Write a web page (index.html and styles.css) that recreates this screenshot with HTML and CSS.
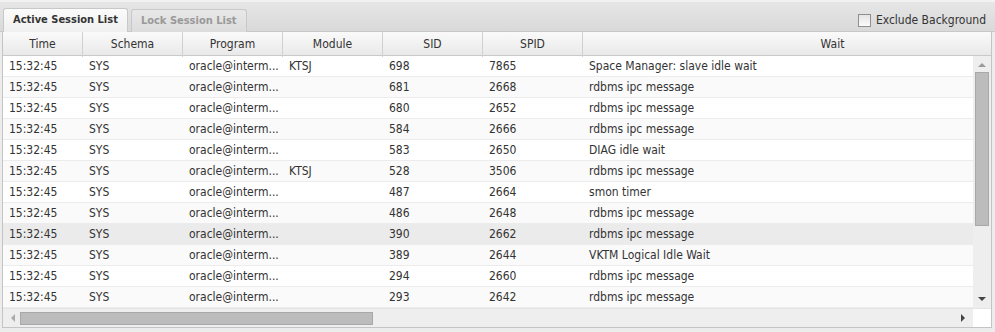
FILE: index.html
```html
<!DOCTYPE html>
<html lang="en">
<head>
  <meta charset="UTF-8">
  <title>Session List</title>
  <link rel="stylesheet" href="styles.css">
</head>
<body>
  <div class="panel">
    <div class="tabbar">
      <div class="tab active">Active Session List</div>
      <div class="tab">Lock Session List</div>
      <label class="exclude"><span class="box"></span>Exclude Background</label>
    </div>

    <div class="grid">
      <div class="head">
        <div class="hcell">Time</div>
        <div class="hcell">Schema</div>
        <div class="hcell">Program</div>
        <div class="hcell">Module</div>
        <div class="hcell">SID</div>
        <div class="hcell">SPID</div>
        <div class="hcell">Wait</div>
      </div>

      <div class="main">
        <div class="rows">
          <div class="row"><span>15:32:45</span><span>SYS</span><span>oracle@interm...</span><span>KTSJ</span><span>698</span><span>7865</span><span>Space Manager: slave idle wait</span></div>
          <div class="row"><span>15:32:45</span><span>SYS</span><span>oracle@interm...</span><span></span><span>681</span><span>2668</span><span>rdbms ipc message</span></div>
          <div class="row"><span>15:32:45</span><span>SYS</span><span>oracle@interm...</span><span></span><span>680</span><span>2652</span><span>rdbms ipc message</span></div>
          <div class="row"><span>15:32:45</span><span>SYS</span><span>oracle@interm...</span><span></span><span>584</span><span>2666</span><span>rdbms ipc message</span></div>
          <div class="row"><span>15:32:45</span><span>SYS</span><span>oracle@interm...</span><span></span><span>583</span><span>2650</span><span>DIAG idle wait</span></div>
          <div class="row"><span>15:32:45</span><span>SYS</span><span>oracle@interm...</span><span>KTSJ</span><span>528</span><span>3506</span><span>rdbms ipc message</span></div>
          <div class="row"><span>15:32:45</span><span>SYS</span><span>oracle@interm...</span><span></span><span>487</span><span>2664</span><span>smon timer</span></div>
          <div class="row"><span>15:32:45</span><span>SYS</span><span>oracle@interm...</span><span></span><span>486</span><span>2648</span><span>rdbms ipc message</span></div>
          <div class="row hover"><span>15:32:45</span><span>SYS</span><span>oracle@interm...</span><span></span><span>390</span><span>2662</span><span>rdbms ipc message</span></div>
          <div class="row"><span>15:32:45</span><span>SYS</span><span>oracle@interm...</span><span></span><span>389</span><span>2644</span><span>VKTM Logical Idle Wait</span></div>
          <div class="row"><span>15:32:45</span><span>SYS</span><span>oracle@interm...</span><span></span><span>294</span><span>2660</span><span>rdbms ipc message</span></div>
          <div class="row"><span>15:32:45</span><span>SYS</span><span>oracle@interm...</span><span></span><span>293</span><span>2642</span><span>rdbms ipc message</span></div>
        </div>
        <div class="vscroll">
          <span class="arrow up"></span>
          <div class="vtrack"><div class="vthumb"></div></div>
          <span class="arrow down"></span>
        </div>
      </div>

      <div class="hbar">
        <div class="hscroll">
          <span class="arrow left"></span>
          <div class="htrack"><div class="hthumb"></div></div>
          <span class="arrow right"></span>
        </div>
        <div class="corner"></div>
      </div>
    </div>
  </div>
</body>
</html>
```

FILE: styles.css
```css
body {
  margin: 0;
  font-family: 'DejaVu Sans Condensed', 'DejaVu Sans', sans-serif;
  font-size: 11px;
  color: #333;
  background: #ececec;
}

.panel {
  width: 995px;
  height: 332px;
  box-sizing: border-box;
  padding: 0 3px 5px 2px;
  background: #ececec;
}

.tabbar {
  display: flex;
  align-items: flex-end;
  height: 32px;
  box-sizing: border-box;
  margin: 0 -3px 0 -2px;
  padding: 0 0 0 3px;
  border-top: 2px solid #f2f2f2;
  border-bottom: 1px solid #c8c8c8;
  background: linear-gradient(#e6e6e6, #d9d9d9);
}

.tab {
  height: 22px;
  line-height: 22px;
  padding: 0 9px;
  margin-right: 3px;
  margin-bottom: -1px;
  border: 1px solid #c8c8c8;
  border-bottom: none;
  border-radius: 3px 3px 0 0;
  background: linear-gradient(#e8e8e8, #dcdcdc);
  color: #999;
  font-weight: bold;
}

.tab.active {
  background: linear-gradient(#fbfbfb, #f0f0f0);
  color: #333;
  height: 23px;
}

.exclude {
  margin-left: auto;
  margin-right: 9px;
  margin-bottom: 4px;
  display: flex;
  align-items: center;
  gap: 5px;
  font-size: 12px;
  color: #333;
}

.box {
  width: 11px;
  height: 11px;
  border: 1px solid #8f8f8f;
  background: linear-gradient(#e4e4e4, #fbfbfb);
}

.grid {
  border: 1px solid #c4c4c4;
  border-top: none;
  background: #fff;
  overflow: hidden;
}

.head {
  display: grid;
  grid-template-columns: 80px 100px 100px 100px 100px 100px 500px;
  height: 23px;
  border-bottom: 1px solid #c9c9c9;
  background: linear-gradient(#fafafa, #e9e9e9);
}

.hcell {
  border-right: 1px solid #d0d0d0;
  text-align: center;
  line-height: 25px;
  font-size: 12px;
  white-space: nowrap;
}

.main {
  display: flex;
}

.rows {
  flex: 1;
  overflow: hidden;
}

.row {
  display: grid;
  grid-template-columns: 80px 100px 100px 100px 100px 100px 500px;
  height: 21px;
  line-height: 21px;
  box-sizing: border-box;
  border-bottom: 1px solid #ececec;
  font-size: 12px;
}

.row:nth-child(even) {
  background: #fafafa;
}

.row.hover {
  background: #ebebeb;
}

.row span {
  padding-left: 6px;
  white-space: nowrap;
}

.vscroll {
  width: 18px;
  display: flex;
  flex-direction: column;
  align-items: center;
  background: #eeeeee;
}

.vtrack {
  flex: 1;
  width: 14px;
}

.vthumb {
  height: 154px;
  background: #bcbcbc;
  border: 1px solid #a8a8a8;
  box-sizing: border-box;
}

.arrow {
  width: 0;
  height: 0;
  border: 4px solid transparent;
}

.arrow.up {
  margin: 7px 0 5px;
  border-bottom-color: #9a9a9a;
  border-top: none;
}

.arrow.down {
  margin: 6px 0 7px;
  border-top-color: #444;
  border-bottom: none;
}

.hbar {
  display: flex;
  height: 18px;
  border-top: 1px solid #e4e4e4;
}

.hscroll {
  flex: 1;
  display: flex;
  align-items: center;
  background: #eeeeee;
}

.htrack {
  flex: 1;
  height: 13px;
  margin: 0 8px 0 5px;
}

.hthumb {
  width: 353px;
  height: 13px;
  box-sizing: border-box;
  background: #bcbcbc;
  border: 1px solid #a8a8a8;
}

.arrow.left {
  margin-left: 8px;
  border-right-color: #aaa;
  border-left: none;
}

.arrow.right {
  margin-right: 8px;
  border-left-color: #444;
  border-right: none;
}

.corner {
  width: 18px;
  background: #fff;
}
```
